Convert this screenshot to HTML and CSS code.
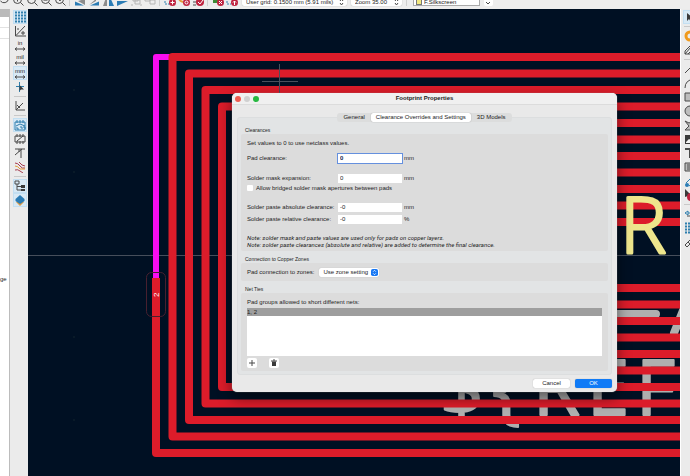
FILE: index.html
```html
<!DOCTYPE html>
<html lang="en">
<head>
<meta charset="utf-8">
<title>Footprint Editor</title>
<link rel="stylesheet" href="styles.css">
</head>
<body>
<header class="topbar">
  <div class="topbar-row">
    <div class="tools">
      <button aria-label="Refresh"><svg viewBox="0 0 12 12"><path d="M10.500 1v4a4.500 4.500 0 0 1-8 2M8 5l3-1" /></svg></button>
      <button aria-label="Zoom in"><svg viewBox="0 0 12 12"><circle cx="5.500" cy="5.500" r="4"/><path d="M8.500 8.500l3 3M3.500 5.500h4M5.500 3.500v4"/></svg></button>
      <button aria-label="Zoom out"><svg viewBox="0 0 12 12"><circle cx="5.500" cy="5.500" r="4"/><path d="M8.500 8.500l3 3M3.500 5.500h4"/></svg></button>
      <button aria-label="Zoom to fit"><svg viewBox="0 0 12 12"><circle cx="5.500" cy="5.500" r="4"/><path d="M8.500 8.500l3 3"/><path class="fg" d="M3.500 4h4v3h-4z"/></svg></button>
      <button aria-label="Zoom to objects"><svg viewBox="0 0 12 12"><circle cx="5.500" cy="5.500" r="4"/><path d="M8.500 8.500l3 3M4 4l2 3 1-2"/></svg></button>
      <span class="sep"></span>
      <button aria-label="Rotate left"><svg viewBox="0 0 12 12"><path class="fb" d="M1 11.500h9l-9-4z"/><path class="fg" d="M4 7l7 4V5z"/></svg></button>
      <button aria-label="Rotate right"><svg viewBox="0 0 12 12"><path class="fb" d="M11 11.500H2l9-4z"/><path class="fg" d="M8 7l-7 4 7-6z"/></svg></button>
      <button aria-label="Mirror horizontally"><svg viewBox="0 0 12 12"><path class="fb" d="M7 1v11h5z"/><path class="fg" d="M5 1v11H1z"/></svg></button>
      <button aria-label="Mirror vertically"><svg viewBox="0 0 12 12"><path class="fb" d="M1 7h11L1 12z"/><path class="fg" d="M1 5h11L1 1z"/></svg></button>
      <button aria-label="Group"><svg viewBox="0 0 12 12" class="dim"><path d="M1 1h2M1 11h2M10 1h2M10 11h2M3 3h5v4H3zM5 6h5v4H5z"/></svg></button>
      <button aria-label="Ungroup"><svg viewBox="0 0 12 12" class="dim"><path d="M1 3h5v4H1zM6 6h5v4H6z"/></svg></button>
      <span class="sep"></span>
      <button aria-label="Footprint properties"><svg viewBox="0 0 12 12"><path class="sb" d="M1 1v9h5" stroke-dasharray="2 1"/><circle class="fr" cx="8.500" cy="8.500" r="3.500"/><path class="sw" d="M6.500 8.500h4M8.500 6.500v4"/></svg></button>
      <button aria-label="Pad properties"><svg viewBox="0 0 12 12"><path class="so" d="M1 1v3q0 3 4 4"/><circle class="fr" cx="8.500" cy="8.500" r="3.500"/><circle class="sw" cx="8.500" cy="8.500" r="1.500"/></svg></button>
      <button aria-label="Check footprint"><svg viewBox="0 0 12 12"><path d="M1 2h3M1 5h3M1 8h3M1 11h3"/><circle class="fr" cx="8" cy="8" r="4"/><path class="sw" d="M6 8l2 2 3-4"/></svg></button>
      <span class="sep"></span>
      <button aria-label="Load from board"><svg viewBox="0 0 12 12"><path class="fn" d="M1 0h8v9H1z"/><circle class="fr" cx="8.500" cy="8.500" r="3.500"/><path class="sw" d="M7 7l3 3M10 7l-3 3"/></svg></button>
      <button aria-label="Insert on board"><svg viewBox="0 0 12 12"><path class="sb" d="M1 1v9h4" stroke-dasharray="2 1"/><circle class="fr" cx="8.500" cy="8.500" r="3.500"/><path class="sw" d="M8.500 11V7M7 8.500L8.500 7 10 8.500"/></svg></button>
    </div>
    <div class="picker grid-picker"><select aria-label="Grid"><option>User grid: 0.1500 mm (5.91 mils)</option></select><svg viewBox="0 0 5 8"><path d="M1 3l1.500-2L4 3M1 5l1.500 2L4 5"/></svg></div>
    <div class="picker zoom-picker"><select aria-label="Zoom"><option>Zoom 35.00</option></select><svg viewBox="0 0 5 8"><path d="M1 3l1.500-2L4 3M1 5l1.500 2L4 5"/></svg></div>
    <span class="sep"></span>
    <div class="layer"><span class="swatch"></span><select aria-label="Layer"><option>F.Silkscreen</option></select></div>
    <button class="drop" aria-label="Show layers"><svg viewBox="0 0 8 8"><path d="M2 4l2 2 2-2"/></svg></button>
  </div>
</header>

<div class="workspace">
  <aside class="library">
    <div class="library-head"></div>
    <div class="library-row"></div>
    <div class="library-row"></div>
    <p>ge</p>
  </aside>

  <nav class="sidebar left" aria-label="Display options">
    <button class="on" aria-label="Grid"><svg viewBox="0 0 12 12"><path class="sb dots" d="M1 1.500h11M1 4.500h11M1 7.500h11M1 10.500h11"/></svg></button>
    <button aria-label="Polar coordinates"><svg viewBox="0 0 12 12"><path d="M1.500 1v10H12M2 10.500L11 1M4 3v2M8 7h2v2H8z"/></svg></button>
    <button aria-label="Inches"><span>in</span><svg class="arrow" viewBox="0 0 12 4"><path d="M1 2h10M3 .5L1 2l2 1.500M9 .5L11 2 9 3.500"/></svg></button>
    <button aria-label="Mils"><span>mil</span><svg class="arrow" viewBox="0 0 12 4"><path d="M1 2h10M3 .5L1 2l2 1.500M9 .5L11 2 9 3.500"/></svg></button>
    <button class="on" aria-label="Millimeters"><span>mm</span><svg class="arrow" viewBox="0 0 12 4"><path d="M1 2h10M3 .5L1 2l2 1.500M9 .5L11 2 9 3.500"/></svg></button>
    <button aria-label="Full cursor"><svg viewBox="0 0 12 12"><path class="sb" d="M5.500 1v10M2 5.500h8"/><path class="fk" d="M5.500 4v6l1.500-1.500h3z"/></svg></button>
    <span class="sep"></span>
    <button aria-label="Angle limit"><svg viewBox="0 0 12 12"><path d="M2 1v9h9M2 10l7-7M3 5l3 3"/></svg></button>
    <span class="sep"></span>
    <button class="on" aria-label="Pad fill"><svg viewBox="0 0 12 12"><path class="sb" d="M1 3h10v8H1zM3 1v3M6 1v3M9 1v3M2 7l4-2 5 2M2 9h2v2M6 8h2v2M9 8h2v2"/></svg></button>
    <button aria-label="Graphics outlines"><svg viewBox="0 0 12 12"><path d="M1 3h10v6H1zM3 1v3M6 1v3M9 1v3M3 8v3M6 8v3M9 8v3M3 8l6-5"/></svg></button>
    <button aria-label="Text outlines"><svg viewBox="0 0 12 12"><path d="M1 2h10M7 2v9M1 8l7-6M5 2v3"/></svg></button>
    <button aria-label="High contrast"><svg viewBox="0 0 12 12"><path class="sr" d="M1 2q3 0 5 3t5 2M1 9q3-1 5 1l3 2M5 1l3 3 3 1"/><path class="so thin" d="M1 5q3 0 5 3h5"/></svg></button>
    <span class="sep"></span>
    <button class="on" aria-label="Library tree"><svg viewBox="0 0 12 12"><path d="M1 1h4v3H1zM3 4v6h4M3 6.500h4"/><path class="fk" d="M7 5h4v3H7zM7 9h4v2H7z"/></svg></button>
    <button class="on" aria-label="Layers manager"><svg viewBox="0 0 12 12"><path class="fo" d="M2 8l4 4 4-4-4-2z"/><path class="fb" d="M1.500 5L6 1l4.500 4v2L6 10 1.500 7z"/></svg></button>
  </nav>

  <main class="canvas">
    <svg class="board" viewBox="28 9 652 467" preserveAspectRatio="xMidYMin slice" role="img" aria-label="Footprint">
      <g class="griddots"><path d="M73.500 90h1M73.500 172h1M73.500 337h1M73.500 420h1"/></g>
      <path class="axis" d="M28 255.500H680"/>
      <g class="fab">
        <text y="415" x="440 492 533 587 636">${REF</text>
        <path d="M600 314H656M688 298L674 333"/>
      </g>
      <path class="link" d="M156 280V57H174"/>
      <g class="tracks">
        <path d="M156 282V453H684"/>
        <path d="M684 57H172.500V436.500H684"/>
        <path d="M684 73.500H189V420H684"/>
        <path d="M684 90H205.500V403.500H684"/>
        <path d="M684 106.500H222V387H684"/>
        <path d="M684 123H238.500V370.500H684"/>
        <path d="M684 139.500H255V354H684"/>
        <path d="M684 156H271.500V337.500H684"/>
        <path d="M684 172.500H288V321H684"/>
        <path d="M684 189H304.500V304.500H684"/>
        <path d="M684 205.500H321V288H684"/>
        <path d="M684 222H337"/>
      </g>
      <path class="padend" d="M152 278h8v8h-8z"/>
      <rect class="pad" x="146.500" y="272.500" width="19" height="44" rx="5"/>
      <text class="padnum" transform="translate(159 297) rotate(-90)">2</text>
      <path class="cross" d="M262 81.500H298M279.500 64V94"/>
      <text class="silk" x="620" y="253">R</text>
    </svg>
  </main>

  <nav class="sidebar right" aria-label="Drawing tools">
    <button class="on" aria-label="Select"><svg viewBox="0 0 12 12"><path class="fk" d="M3 2v8l2-2 2 3 1-1-2-3h3z"/></svg></button>
    <span class="sep"></span>
    <button aria-label="Add pad"><svg viewBox="0 0 12 12"><circle class="ring" cx="6" cy="6" r="4"/></svg></button>
    <button aria-label="Add rule area"><svg viewBox="0 0 12 12"><path d="M1 10h10V6H7V1L1 7zM1 10l6-7M4 10l4-4M8 10l3-3"/></svg></button>
    <span class="sep"></span>
    <button aria-label="Draw line"><svg viewBox="0 0 12 12"><path d="M1 10L10 1"/></svg></button>
    <button aria-label="Draw arc"><svg viewBox="0 0 12 12"><path d="M1 11Q1 3 10 2"/></svg></button>
    <button aria-label="Draw rectangle"><svg viewBox="0 0 12 12"><path class="box" d="M1 2h10v8H1z"/></svg></button>
    <button aria-label="Draw circle"><svg viewBox="0 0 12 12"><circle class="box" cx="6" cy="6" r="5"/></svg></button>
    <button aria-label="Draw polygon"><svg viewBox="0 0 12 12"><path class="box" d="M1 2l4 2 6-3v10H1l4-4z"/></svg></button>
    <button aria-label="Add image"><svg viewBox="0 0 12 12"><path class="fk" d="M1 2h10v9H1z"/><path class="fw" d="M2 9l3-3 2 1 3-2v5H2z"/></svg></button>
    <button aria-label="Add text"><svg viewBox="0 0 12 12"><path class="bold" d="M1 2h10M6 2v9"/></svg></button>
    <button aria-label="Add text box"><svg viewBox="0 0 12 12"><path class="box" d="M1 2h10v8H1zM3 4h7M3 6h7M3 8h5"/></svg></button>
    <button aria-label="Add dimension"><svg viewBox="0 0 12 12"><path class="sb" d="M2 8L9 1M5 11l6-5"/><circle class="fb" cx="3" cy="10" r="2"/></svg></button>
    <button aria-label="Delete"><svg viewBox="0 0 12 12"><path class="fk" d="M1 0v8l6-2z"/><circle class="fr" cx="7" cy="8" r="4"/></svg></button>
    <span class="sep"></span>
    <button aria-label="Set anchor"><svg viewBox="0 0 12 12"><path class="sb" d="M1 5l3-2v4zM4 5h7"/><path d="M3 8h5l3 2"/></svg></button>
    <button aria-label="Set grid origin"><svg viewBox="0 0 12 12"><path class="sb dots" d="M1 1.500h11M1 4.500h11M1 7.500h11M1 10.500h11"/></svg></button>
    <button aria-label="Measure"><svg viewBox="0 0 12 12"><path d="M1 9l8-8 2 2-8 8zM4 6l2 2"/></svg></button>
  </nav>
</div>

<form class="dialog" role="dialog" aria-labelledby="dialog-title">
  <header class="titlebar">
    <div class="lights"><i class="close"></i><i class="min"></i><i class="max"></i></div>
    <h1 id="dialog-title">Footprint Properties</h1>
  </header>
  <div class="tabs" role="tablist">
    <button type="button" role="tab">General</button>
    <button type="button" role="tab" class="active" aria-selected="true">Clearance Overrides and Settings</button>
    <button type="button" role="tab">3D Models</button>
  </div>
  <div class="panel">
    <h2>Clearances</h2>
    <section class="group clearances">
      <p>Set values to 0 to use netclass values.</p>
      <div class="field focus"><label for="pad">Pad clearance:</label><input id="pad" value="0"><span>mm</span></div>
      <div class="stack">
        <div class="field"><label for="mask">Solder mask expansion:</label><input id="mask" value="0"><span>mm</span></div>
        <label class="check"><input type="checkbox">Allow bridged solder mask apertures between pads</label>
      </div>
      <div class="stack paste">
        <div class="field"><label for="abs">Solder paste absolute clearance:</label><input id="abs" value="-0"><span>mm</span></div>
        <div class="field"><label for="rel">Solder paste relative clearance:</label><input id="rel" value="-0"><span>%</span></div>
      </div>
      <div class="notes">
        <p>Note: solder mask and paste values are used only for pads on copper layers.</p>
        <p>Note: solder paste clearances (absolute and relative) are added to determine the final clearance.</p>
      </div>
    </section>
    <h2>Connection to Copper Zones</h2>
    <section class="group zones">
      <label for="zone">Pad connection to zones:</label>
      <div class="popup"><select id="zone"><option>Use zone setting</option></select><svg viewBox="0 0 8 8"><rect width="8" height="8" rx="2"/><path d="M2.500 3L4 1.500 5.500 3M2.500 5L4 6.500 5.500 5"/></svg></div>
    </section>
    <h2>Net Ties</h2>
    <section class="group ties">
      <p>Pad groups allowed to short different nets:</p>
      <ul class="list"><li>1, 2</li></ul>
      <div class="list-actions">
        <button type="button" aria-label="Add group"><svg viewBox="0 0 10 10"><path d="M5 2v6M2 5h6"/></svg></button>
        <button type="button" aria-label="Delete group"><svg viewBox="0 0 10 10"><path d="M2 3h6M4 2h2"/><path class="fk" d="M3 3.500h4V8H3z"/></svg></button>
      </div>
    </section>
  </div>
  <footer class="actions">
    <button type="button">Cancel</button>
    <button type="submit" class="primary">OK</button>
  </footer>
</form>
</body>
</html>
```
FILE: styles.css
```css
* { box-sizing: border-box; }
html, body { height: 100%; }
body {
  margin: 0;
  display: flex;
  flex-direction: column;
  overflow: hidden;
  background: #ececec;
  color: #1c1c1c;
  font: 6px/8px "Liberation Sans", Arial, sans-serif;
}
h1, h2, p, ul { margin: 0; padding: 0; font-size: inherit; font-weight: normal; }
button, input, select { margin: 0; padding: 0; border: 0; background: none; color: inherit; font: inherit; }
select { appearance: none; outline: 0; }
svg { display: block; fill: none; stroke: #4a4a4a; stroke-width: 1; }

.fg { fill: #8b8b8b; stroke: none; }
.fb { fill: #2b7cb5; stroke: none; }
.fr { fill: #bf2440; stroke: none; }
.fn { fill: #3d8a35; stroke: none; }
.fk { fill: #3a3a3a; stroke: none; }
.fo { fill: #dc9a45; stroke: none; }
.fw { fill: #f4f4f4; stroke: none; }
.sb { stroke: #2f7fae; }
.sr { stroke: #a63c50; }
.so { stroke: #e59a36; stroke-width: 2; }
.thin { stroke-width: 1; }
.sw { stroke: #fff; }
.dim { stroke: #b5b5b5; }
.dots { stroke-width: 2; stroke-dasharray: 2 1; }
.box { fill: #bdbdbd; }
.bold { stroke-width: 2; }
.ring { stroke: #f09a1c; stroke-width: 3; }

/* Top toolbar */
.topbar {
  flex: none;
  height: 9px;
  display: flex;
  align-items: flex-end;
  overflow: hidden;
  padding-bottom: 3px;
  background: #ededed;
}
.topbar-row { display: flex; align-items: flex-end; gap: 4px; }
.tools { display: flex; gap: 2px; margin-left: -2px; }
.tools svg { width: 12px; height: 12px; }
.topbar .sep { width: 3px; height: 12px; border-left: 1px solid #cfcfcf; }
.tools .sep { margin-left: 1px; width: 3px; }
.picker { position: relative; height: 8px; border-radius: 2px; background: #fff; box-shadow: 0 0 1px #999; }
.picker select { display: block; width: 100%; height: 8px; padding: 0 4px; }
.picker svg { position: absolute; right: 3px; top: 0; width: 5px; height: 8px; }
.grid-picker { width: 105px; }
.zoom-picker { width: 51px; }
.layer { display: flex; align-items: center; width: 67px; height: 9px; gap: 2px; padding-left: 2px; background: #fff; border: 1px solid #aaa; }
.layer select { flex: 1; height: 7px; }
.swatch { width: 6px; height: 7px; background: #f2e87e; border: 1px solid #777; }
.drop { width: 9px; height: 8px; border-radius: 2px; background: #fff; }
.drop svg { width: 8px; height: 8px; }

/* Workspace */
.workspace { flex: 1; min-height: 0; display: flex; }
.library { flex: none; width: 10px; background: #fff; border-right: 1px solid #bcbcbc; overflow: hidden; }
.library-head { height: 8px; background: #bababa; }
.library-row { height: 11px; border-bottom: 1px solid #e2e2e2; }
.library p { margin-top: 236px; }
.sidebar { flex: none; display: flex; flex-direction: column; padding-top: 1px; background: #ebebeb; overflow: hidden; }
.sidebar.left { width: 18px; padding-left: 3px; }
.sidebar.right { width: 10px; padding-left: 2px; border-left: 1px solid #fff; }
.sidebar button { flex: none; width: 14px; height: 14px; padding: 1px; line-height: 7px; }
.sidebar svg { width: 12px; height: 12px; }
.sidebar .arrow { height: 4px; }
.sidebar button span { display: block; text-align: center; }
.sidebar .on { background: #d8e9f5; box-shadow: inset 0 0 0 1px #c3dff2; }
.sidebar .sep { flex: none; width: 12px; height: 1px; margin: 2px 1px; background: #c9c9c9; }

.canvas { flex: 1; min-width: 0; background: #001023; }
.board { width: 100%; height: 100%; }
.griddots { stroke: #27383b; }
.axis { stroke: #464e5b; }
.cross { stroke: #49505d; }
.fab { stroke: #afafaf; stroke-width: 8; stroke-linecap: round; }
.fab text { font: 76px "Open Sans", sans-serif; fill: #afafaf; stroke-width: 2; stroke-linejoin: round; }
.link { stroke: #f80df0; stroke-width: 6; stroke-linejoin: round; }
.tracks { stroke: #dc1c2a; stroke-width: 8; stroke-linejoin: round; }
.padend { fill: #dc1c2a; stroke: none; }
.pad { stroke: #47202f; }
.padnum { font: 8px "Liberation Sans", sans-serif; fill: #fff; stroke: none; }
.silk { font: 300 78px "Open Sans", sans-serif; fill: #eee68c; stroke: #eee68c; stroke-width: 3; stroke-linejoin: round; }

/* Dialog */
.dialog {
  position: absolute;
  left: 232px;
  right: 73px;
  top: 93px;
  padding-bottom: 4px;
  border-radius: 5px;
  background: #e9e9e9;
  box-shadow: 0 0 1px #aaa, 0 6px 14px rgba(0, 0, 0, .5);
}
.titlebar { position: relative; height: 12px; border-bottom: 1px solid #dcdcdc; border-radius: 5px 5px 0 0; background: #f0f0f0; }
.titlebar h1 { line-height: 11px; font-weight: bold; text-align: center; }
.lights { position: absolute; left: 3px; top: 3px; display: flex; gap: 3px; }
.lights i { width: 6px; height: 6px; border-radius: 50%; }
.close { background: #ee5b50; }
.min { background: #d0d0d0; }
.max { background: #27b840; }
.tabs { position: relative; display: flex; width: max-content; margin: 8px auto 0; border-radius: 3px; background: #dcdddd; }
.tabs button { height: 9px; padding: 0 6px; border-radius: 2px; line-height: 9px; }
.tabs .active { padding: 0 5px; background: #fff; box-shadow: 0 0 1px #888; }
.panel { margin: -5px 5px 0; padding: 7px 3px 3px; border: 1px solid #dcdedf; border-radius: 3px; background: #e2e4e5; }
.panel h2 { height: 9px; padding-left: 4px; font-size: 5px; line-height: 10px; }
.panel .group + h2 { margin-top: 3px; }
.group { padding: 0 6px; border-radius: 2px; background: #dcdcdc; }
.clearances { height: 117px; padding-top: 5px; }
.field { display: grid; grid-template-columns: 91px 64px 1fr; align-items: center; height: 10px; }
.field input { width: 100%; height: 9px; padding: 0 2px; background: #fff; outline: 0; }
.field span { padding-left: 2px; }
.focus { margin-top: 6px; }
.field.focus input { height: 9px; box-shadow: 0 0 0 1px #6590de; color: #10244d; font-weight: bold; }
.stack { margin-top: 10px; }
.check { display: flex; align-items: center; gap: 3px; height: 10px; }
.check input { appearance: none; width: 6px; height: 6px; border-radius: 1px; background: #fff; }
.paste { margin-top: 9px; display: grid; gap: 2px; }
.notes { margin-top: 10px; font-family: Roboto, sans-serif; font-style: italic; line-height: 7px; }
.zones { display: flex; align-items: center; gap: 5px; height: 18px; }
.popup { position: relative; width: 60px; height: 9px; border-radius: 2px; background: #fff; box-shadow: 0 0 1px #aaa; }
.popup select { display: block; width: 100%; height: 9px; padding-left: 4px; }
.popup svg { position: absolute; right: 1px; top: 1px; width: 7px; height: 7px; fill: #1677f4; stroke: none; }
.popup path { fill: none; stroke: #fff; }
.ties { padding-top: 5px; padding-bottom: 3px; }
.list { height: 48px; margin: 2px 0; background: #fff; list-style: none; }
.list li { background: #9e9e9e; }
.list-actions { display: flex; gap: 12px; }
.list-actions button { width: 10px; height: 10px; border-radius: 2px; background: #fff; }
.list-actions svg { width: 10px; height: 10px; }
.actions { display: flex; justify-content: flex-end; gap: 5px; padding: 4px 5px 0; }
.actions button { width: 37px; height: 9px; border-radius: 2px; background: #fff; box-shadow: 0 0 1px #999; line-height: 9px; text-align: center; }
.actions .primary { background: #107bf6; color: #fff; }
```
